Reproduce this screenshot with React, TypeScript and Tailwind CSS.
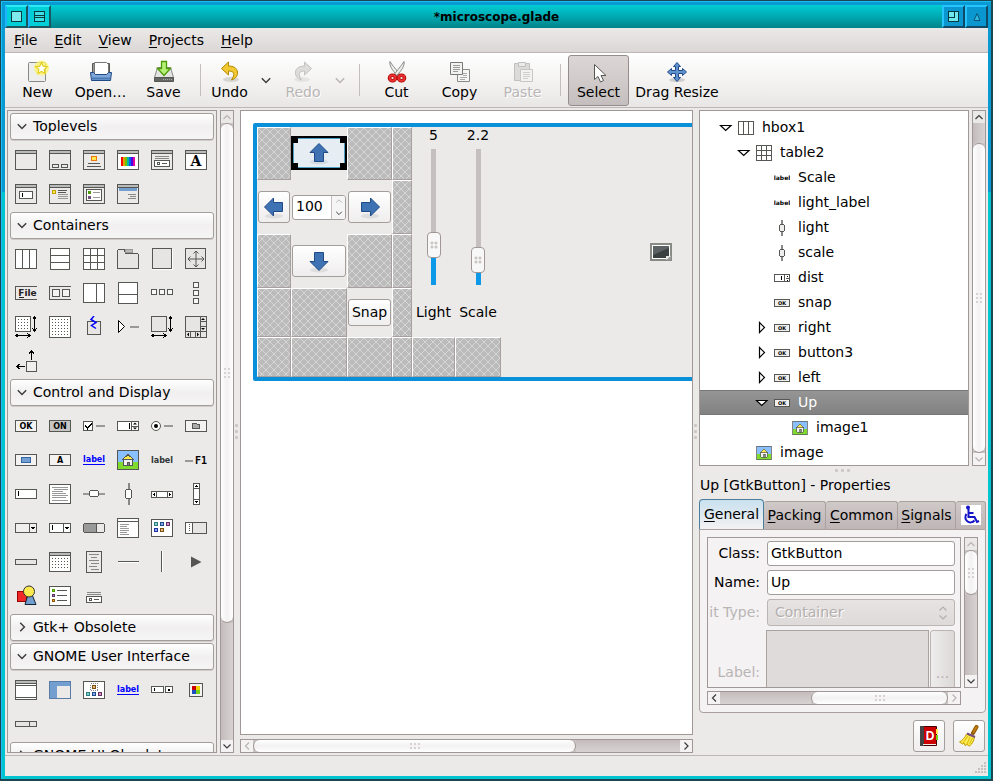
import React, { useId } from "react";
import type { ReactNode } from "react";

const INK = "#555753";

/* ---------- shared drawing helpers ---------- */

function Pic({ children, size = 22, box = 22 }: { children: ReactNode; size?: number; box?: number }) {
  return (
    <svg width={size} height={size} viewBox={`0 0 ${box} ${box}`} fill="none" stroke={INK} shapeRendering="crispEdges" aria-hidden="true" className="block shrink-0">
      {children}
    </svg>
  );
}

function Word({ x, y, children, size = 8, fill = "#000", anchor = "middle", family = "DejaVu Sans" }: { x: number; y: number; children: string; size?: number; fill?: string; anchor?: "start" | "middle"; family?: string }) {
  return (
    <text x={x} y={y} fontSize={size} fontWeight="bold" fontFamily={`"${family}", sans-serif`} fill={fill} stroke="none" textAnchor={anchor}>
      {children}
    </text>
  );
}

function Frame({ x = 0.5, y = 0.5, w = 21, h = 21, fill = "none", r = 1 }: { x?: number; y?: number; w?: number; h?: number; fill?: string; r?: number }) {
  return <rect x={x} y={y} width={w} height={h} rx={r} fill={fill} />;
}

function Win({ fill = "#ebeae8", children }: { fill?: string; children?: ReactNode }) {
  return (
    <Pic>
      <Frame y={1.5} h={19} fill={fill} />
      <path d="M1 3h20" stroke="#bababa" strokeWidth="2" />
      <path d="M1 4.500h20" />
      {children}
    </Pic>
  );
}

function HouseArt() {
  return (
    <>
      <rect x="1" y="1" width="20" height="20" fill="#8ac0ff" stroke="none" />
      <rect x="1" y="13" width="20" height="7" fill="#7fdc2f" stroke="none" />
      <path d="M6.500 10.500h9v6h-9z" fill="#f4f2f0" />
      <path d="M11 5.500L5.500 10.500h11z" fill="#fce94f" />
      <path d="M10.500 13v3.500h2V13z" fill="#888" />
      <rect x="0.500" y="1.500" width="21" height="19" rx="1" />
    </>
  );
}

/* ---------- palette icons ---------- */

const toplevels: ReactNode[] = [
  <Win />,
  <Win>
    <Frame x={3.5} y={15.500} w={6} h={3} />
    <Frame x={12.5} y={15.500} w={6} h={3} />
  </Win>,
  <Win>
    <rect x="8.500" y="7.500" width="5" height="4" fill="#fce94f" stroke="#f0780a" />
    <path d="M5 14.500h12M4 17.500h14" />
  </Win>,
  <Win fill="#fff">
    <path d="M5 8v9" stroke="#f00" strokeWidth="2" />
    <path d="M7 8v9" stroke="#e0a000" strokeWidth="2" />
    <path d="M9 8v9" stroke="#70c000" strokeWidth="2" />
    <path d="M11 8v9" stroke="#00b8a0" strokeWidth="2" />
    <path d="M13 8v9" stroke="#0060f0" strokeWidth="2" />
    <path d="M15 8v9" stroke="#5000e0" strokeWidth="2" />
    <path d="M17 8v9" stroke="#e000a0" strokeWidth="2" />
  </Win>,
  <Win>
    <path d="M4 7.500h14M4 9.500h14" stroke="#888" />
    <Frame x={3.5} y={11.500} w={15} h={6} fill="#fff" />
    <path d="M6.500 13.500h2v2h-2zM11 14.500h5" />
  </Win>,
  <Win fill="#fff">
    <Word x={11} y={17} size={14} family="DejaVu Serif">A</Word>
  </Win>,
  <Win>
    <Frame x={4.500} y={8.500} w={13} h={7} fill="#fff" />
    <path d="M7.500 10v4" stroke="#000" />
  </Win>,
  <Win>
    <rect x="3.500" y="7.500" width="3" height="3" fill="#fce94f" stroke="#c4a000" />
    <path d="M9 7.500h9M9 9.500h8" />
    <path d="M9 11.500h10M9 13.500h10M9 15.500h10" stroke="#999" />
  </Win>,
  <Win>
    <Frame x={3.5} y={6.500} w={15} h={11} fill="#fff" />
    <rect x="5" y="8" width="3" height="3" fill="#4e9a06" stroke="none" />
    <rect x="5" y="13" width="3" height="3" fill="#75507b" stroke="none" />
    <path d="M10 9.500h7M10 14.500h7" stroke="#999" />
  </Win>,
  <Win>
    <rect x="2" y="5" width="18" height="3" fill="#729fcf" stroke="none" />
    <path d="M11 11.500h8M13 13.500h6M11 15.500h8" stroke="#888" />
  </Win>,
];

const containers: ReactNode[] = [
  <Pic><Frame h={19} y={1.5} fill="#fff" /><path d="M7.500 2v19M14.500 2v19" /></Pic>,
  <Pic><Frame x={1.5} w={19} fill="#fff" /><path d="M2 7.500h18M2 14.500h18" /></Pic>,
  <Pic><Frame fill="#fff" /><path d="M7.500 1v20M14.500 1v20M1 7.500h20M1 14.500h20" /></Pic>,
  <Pic><path d="M.5 20.500V2.500l1-1h6l1 4h12l1 1v14z" fill="#e6e5e3" /><path d="M8.500 1.500h7v3h-7z" fill="#bababa" stroke="#999" /></Pic>,
  <Pic><Frame x={1.5} w={19} h={20} fill="#e6e5e3" /><path d="M21.500 1v20.500H1" stroke="#fff" /></Pic>,
  <Pic><Frame w={20} h={20} fill="#e6e5e3" /><path d="M11 3v16M3 11h16M8.500 5.500L11 3l2.500 2.500M8.500 16.500L11 19l2.500-2.500M5.500 8.500L3 11l2.500 2.500M16.500 8.500L19 11l-2.500 2.500" shapeRendering="auto" /></Pic>,
  <Pic><path d="M22 4.500H.5v13H22" /><Word x={12.5} y={14} size={9} fill="#222">File</Word><path d="M4 15.500h5" stroke="#222" /></Pic>,
  <Pic><path d="M22 4.500H.5v13H22" /><Frame x={3.5} y={7.500} w={7} h={7} fill="#f4f3f2" /><Frame x={13.5} y={7.500} w={7} h={7} fill="#f4f3f2" /></Pic>,
  <Pic><Frame y={1.5} h={19} fill="#fff" /><path d="M13.500 2v19" /></Pic>,
  <Pic><Frame x={1.5} w={19} fill="#fff" /><path d="M2 12.500h18" /></Pic>,
  <Pic><Frame x={0.5} y={7.500} w={5} h={5} fill="#f8f8f8" /><Frame x={8.5} y={7.500} w={5} h={5} fill="#f8f8f8" /><Frame x={16.5} y={7.500} w={5} h={5} fill="#f8f8f8" /></Pic>,
  <Pic><Frame x={8.500} y={0.5} w={5} h={5} fill="#f8f8f8" /><Frame x={8.500} y={8.500} w={5} h={5} fill="#f8f8f8" /><Frame x={8.500} y={16.500} w={5} h={5} fill="#f8f8f8" /></Pic>,
  <Pic><Frame w={15} h={15} fill="#fff" /><path d="M3 3.500h11M3 6.500h11M3 9.500h11M3 12.500h11" strokeDasharray="1 2" /><path d="M19.500 1v14M17.500 3.500l2-3 2 3M17.500 12.500l2 3 2-3M1 19.500h14M3.500 17.500l-3 2 3 2M12.500 17.500l3 2-3 2" stroke="#000" /></Pic>,
  <Pic><Frame fill="#fff" /><path d="M3 3.500h16M3 6.500h16M3 9.500h16M3 12.500h16M3 15.500h16M3 18.500h16" strokeDasharray="1 2" /></Pic>,
  <Pic><Frame x={4.500} y={5.500} w={13} h={13} fill="#e6e5e3" /><path d="M11 0L8 3.500l5 3L8.500 9.500l4.500 3" stroke="#00f" strokeWidth="1.500" shapeRendering="auto" /></Pic>,
  <Pic><path d="M1.500 4.500v12l6-6z" stroke="#000" fill="#fff" shapeRendering="auto" /><path d="M13 11h9" stroke="#999" strokeWidth="2" /></Pic>,
  <Pic><Frame w={15} h={15} fill="#e6e5e3" /><path d="M19.500 1v14M17.500 3.500l2-3 2 3M17.500 12.500l2 3 2-3M1 19.500h14M3.500 17.500l-3 2 3 2M12.500 17.500l3 2-3 2" stroke="#000" /></Pic>,
  <Pic><Frame fill="#e6e5e3" /><path d="M15.500 1v20M1 15.500h20M5.500 16v5M10.500 16v5M16 5.500h5M16 10.500h5" /><path d="M18 2l2 2h-4zM18 14l2-2h-4zM2 18.500l2-2v4zM14 18.500l-2-2v4z" fill="#000" stroke="none" shapeRendering="auto" /></Pic>,
  <Pic><Frame x={11.500} y={11.500} w={10} h={10} fill="#f0efee" /><path d="M16.500 10V1M14 3.500L16.500 1 19 3.500M10 16.500H2M4.500 14L2 16.500 4.500 19" stroke="#000" /></Pic>,
];

const controls: ReactNode[] = [
  <Pic><Frame y={5.500} h={11} fill="#f4f3f2" /><Word x={11} y={14} size={8}>OK</Word></Pic>,
  <Pic><Frame y={5.500} h={11} fill="#c8c6c5" /><Word x={11} y={14} size={8}>ON</Word></Pic>,
  <Pic><Frame y={6.500} w={9} h={9} fill="#fff" /><path d="M2.500 10.500l2 3 4-5" stroke="#000" strokeWidth="1.500" /><path d="M13 11h9" stroke="#999" strokeWidth="2" /></Pic>,
  <Pic><Frame y={6.500} h={9} fill="#fff" /><path d="M15 11h7" /><path d="M14.500 7v9" /><path d="M12 8v6" stroke="#000" /><path d="M18 7.500l2 2h-4zM18 14.500l2-2h-4z" fill="#000" stroke="none" shapeRendering="auto" /></Pic>,
  <Pic><circle cx="5" cy="11" r="4.500" fill="#fff" shapeRendering="auto" /><circle cx="5" cy="11" r="2" fill="#000" stroke="none" shapeRendering="auto" /><path d="M13 11h9" stroke="#999" strokeWidth="2" /></Pic>,
  <Pic><Frame y={5.500} h={11} fill="#f4f3f2" /><path d="M7.500 13.500v-5h4l1 1h2v4z" fill="#aaa" /></Pic>,
  <Pic><Frame y={5.500} h={11} fill="#f4f3f2" /><rect x="6.500" y="8.500" width="9" height="5" fill="#729fcf" stroke="#3465a4" /></Pic>,
  <Pic><Frame y={5.500} h={11} fill="#f4f3f2" /><Word x={11} y={14} size={8}>A</Word></Pic>,
  <Pic><Word x={11} y={13} size={8} fill="#00f">label</Word><path d="M0 15.500h22" stroke="#00f" /></Pic>,
  <Pic><HouseArt /></Pic>,
  <Pic><Word x={11} y={14} size={8} fill="#2e3436">label</Word></Pic>,
  <Pic><path d="M0 11.500h8" stroke="#999" strokeWidth="2" /><Word x={16} y={15} size={10} family="DejaVu Sans Mono">F1</Word></Pic>,
  <Pic><Frame y={6.500} h={9} fill="#fff" /><path d="M3.500 8v5" stroke="#000" /></Pic>,
  <Pic><Frame y={1.500} h={19} fill="#fff" /><path d="M3 4.500h16M5 6.500h14M3 8.500h11M3 10.500h14M3 12.500h16M3 14.500h14M3 17.500h16" stroke="#999" /></Pic>,
  <Pic><path d="M0 11h22" stroke="#999" strokeWidth="2" /><Frame x={6.500} y={7.500} w={9} h={6} fill="#fff" r={2} /></Pic>,
  <Pic><path d="M11.500 0v22" stroke="#888" strokeWidth="2" /><Frame x={8.500} y={6.500} w={6} h={9} fill="#fff" r={2} /></Pic>,
  <Pic><Frame y={8.500} h={6} fill="#fff" /><path d="M5.500 9v6M16.500 9v6" /><path d="M2 11.500l2-2v4zM20 11.500l-2-2v4z" fill="#000" stroke="none" /></Pic>,
  <Pic><Frame x={8.500} w={6} fill="#fff" /><path d="M9 5.500h6M9 16.500h6" /><path d="M11.500 2l2 2h-4zM11.500 20l2-2h-4z" fill="#000" stroke="none" /></Pic>,
  <Pic><Frame y={6.500} h={9} fill="#f0efee" /><path d="M14.500 7v9" /><path d="M18 13l2-3h-4z" fill="#000" stroke="none" /></Pic>,
  <Pic><Frame y={6.500} h={9} fill="#fff" /><path d="M14.500 7v9" /><path d="M3.500 8v5" stroke="#000" /><path d="M18 13l2-3h-4z" fill="#000" stroke="none" /></Pic>,
  <Pic><Frame y={6.500} h={9} fill="#ebeae8" r={2} /><rect x="1" y="7" width="12" height="8" fill="#999" stroke="none" /><path d="M13.500 7v9" /></Pic>,
  <Pic><Frame y={1.500} h={19} fill="#fff" /><path d="M1 4.500h20" /><path d="M3 7.500h9M3 9.500h7M3 11.500h9M3 13.500h9M3 15.500h7M3 17.500h9" stroke="#999" /></Pic>,
  <Pic><Frame y={2.500} h={17} fill="#fff" /><rect x="3.500" y="5.500" width="3" height="3" fill="#8cc" stroke="#2a7f80" /><rect x="9.500" y="5.500" width="3" height="3" fill="#8ae" stroke="#204a87" /><rect x="15.500" y="5.500" width="3" height="3" fill="#e8b" stroke="#5c3566" /><rect x="3.500" y="11.500" width="3" height="3" fill="#8ae" stroke="#20309f" /><rect x="9.500" y="11.500" width="3" height="3" fill="#db8" stroke="#7f5010" /></Pic>,
  <Pic><Frame y={5.500} h={11} fill="#e6e5e3" /><path d="M7.500 6v11" /><rect x="1" y="6" width="6" height="10" fill="#fff" stroke="none" /><path d="M4.500 7v8" stroke="#555" strokeDasharray="1 1" /></Pic>,
  <Pic><Frame y={8.500} h={5} fill="#e6e5e3" /></Pic>,
  <Pic><Frame y={1.500} h={19} fill="#fff" /><path d="M1 3h20" stroke="#bababa" strokeWidth="2" /><path d="M1 4.500h20" /><path d="M3 7.500h17M3 10.500h17M3 13.500h17M3 16.500h17" strokeDasharray="1 2" /></Pic>,
  <Pic><Frame x={3.500} w={15} fill="#ebeae8" /><path d="M6 3.500h10M8 6.500h6M6 9.500h10M8 12.500h8M6 15.500h8M8 18.500h8" stroke="#888" /></Pic>,
  <Pic><path d="M1 10.500h21" /><path d="M1 11.500h21" stroke="#fff" /></Pic>,
  <Pic><path d="M10.500 0v21" /><path d="M11.500 0v21" stroke="#fff" /></Pic>,
  <Pic><path d="M6 5.500v11L16.500 11z" fill="#555" stroke="none" shapeRendering="auto" /></Pic>,
  <Pic><rect x="2.500" y="6.500" width="9" height="10" fill="#ef2929" stroke="#900" /><path d="M10 19.500h11L17 9.500h-4z" fill="#729fcf" stroke="#123" shapeRendering="auto" /><circle cx="14" cy="6.500" r="5.500" fill="#fce94f" stroke="#333" shapeRendering="auto" /></Pic>,
  <Pic><Frame y={1.500} h={19} fill="#fff" /><rect x="3.500" y="4.500" width="2" height="2" fill="#8ae234" stroke="#4e9a06" /><rect x="3.500" y="9.500" width="2" height="2" fill="#ad7fa8" stroke="#5c3566" /><rect x="3.500" y="14.500" width="2" height="2" fill="#fcaf3e" stroke="#8f5902" /><path d="M8 5.500h10M8 10.500h10M8 15.500h10" /></Pic>,
  <Pic><path d="M4 7.500h14M4 9.500h14" stroke="#888" /><Frame x={3.500} y={11.500} w={15} h={6} fill="#fff" /><path d="M6.500 13.500h2v2h-2zM11 14.500h5" /></Pic>,
];

const gnomeUi: ReactNode[] = [
  <Pic><Frame y={1.500} h={19} fill="#fff" /><path d="M1 3h20" stroke="#bababa" strokeWidth="2" /><path d="M1 4.500h20M1 6.500h20M1 18.500h20" /></Pic>,
  <Pic><Frame y={2.500} h={17} fill="#ebeae8" r={0} /><path d="M1 3h20v4H8v12H1z" fill="#729fcf" stroke="none" /><rect x=".5" y="2.500" width="21" height="17" stroke="#5a7ba5" /></Pic>,
  <Pic><Frame y={2.500} h={17} fill="#fff" /><path d="M7.500 4.500h7v7h-7z" stroke="#888" strokeDasharray="1 1" /><rect x="9.500" y="6.500" width="3" height="3" fill="#db8" stroke="#7f5010" /><rect x="3.500" y="13.500" width="3" height="3" fill="#8cc" stroke="#2a7f80" /><rect x="9.500" y="13.500" width="3" height="3" fill="#8ae" stroke="#204a87" /><rect x="15.500" y="13.500" width="3" height="3" fill="#e8b" stroke="#5c3566" /></Pic>,
  <Pic><Word x={11} y={13} size={8} fill="#00f">label</Word><path d="M0 15.500h22" stroke="#00f" /></Pic>,
  <Pic><Frame y={7.500} w={12} h={6} fill="#fff" /><Frame x={14.500} y={7.500} w={7} h={6} fill="#fff" /><path d="M3.500 9v3" stroke="#000" /><path d="M18 12.500l2-3h-4z" fill="#000" stroke="none" /></Pic>,
  <Pic><Frame x={4.500} y={4.500} w={13} h={13} fill="#f4f3f2" /><rect x="7" y="7" width="4" height="4" fill="#cc0000" stroke="none" /><rect x="11" y="7" width="4" height="4" fill="#edd400" stroke="none" /><rect x="7" y="11" width="4" height="4" fill="#204ac0" stroke="none" /><rect x="11" y="11" width="4" height="4" fill="#73d216" stroke="none" /></Pic>,
  <Pic><Frame y={8.500} h={5} fill="#e6e5e3" /><path d="M14.500 9v5" /></Pic>,
];

/* ---------- generic widgets ---------- */

function Chevron({ dir, faint = false, size = 10 }: { dir: "up" | "down" | "left" | "right"; faint?: boolean; size?: number }) {
  const d = { up: "M1.500 7L5 3.500 8.500 7", down: "M1.500 3.500L5 7l3.500-3.500", left: "M7 1.500L3.500 5 7 8.500", right: "M3.500 1.500L7 5 3.500 8.500" }[dir];
  return (
    <svg width={size} height={size} viewBox="0 0 10 10" fill="none" stroke={faint ? "#b8b4b3" : "#3c3c3c"} strokeWidth="1.200" aria-hidden="true" className="block shrink-0">
      <path d={d} />
    </svg>
  );
}

function Dots({ cols, rows, step = 4 }: { cols: number; rows: number; step?: number }) {
  const cells = Array.from({ length: cols * rows }, (_, i) => i);
  return (
    <svg width={cols * step} height={rows * step} fill="#cbc7c6" aria-hidden="true" className="block shrink-0">
      {cells.map((i) => (
        <rect key={i} x={(i % cols) * step + 1} y={Math.floor(i / cols) * step + 1} width={step > 4 ? 3 : 2} height={step > 4 ? 3 : 2} rx="1" />
      ))}
    </svg>
  );
}

function VScroll({ before, thumb, after, faintUp, faintDown }: { before: string; thumb: string; after: string; faintUp?: boolean; faintDown?: boolean }) {
  return (
    <div className="flex w-[14px] shrink-0 flex-col border border-[#a09896] bg-[#cac3c3]">
      <button type="button" aria-label="Scroll up" className="flex h-3 shrink-0 items-center justify-center bg-[#ebe9e8]"><Chevron dir="up" faint={faintUp} /></button>
      <div className={`${before} bg-linear-to-r from-[#c4bcbc] to-[#d8d3d2]`} />
      <div className={`${thumb} flex items-center justify-center rounded-[6px] border-y border-[#a09896] bg-linear-to-r from-white via-[#f3f1f2] to-white`}>
        <Dots cols={2} rows={3} />
      </div>
      <div className={`${after} bg-linear-to-r from-[#c4bcbc] to-[#d8d3d2]`} />
      <button type="button" aria-label="Scroll down" className="flex h-3 shrink-0 items-center justify-center bg-[#f4f2f2]"><Chevron dir="down" faint={faintDown} /></button>
    </div>
  );
}

function HScroll({ before, thumb, after, faintLeft, faintRight }: { before: string; thumb: string; after: string; faintLeft?: boolean; faintRight?: boolean }) {
  return (
    <div className="flex h-[14px] shrink-0 border border-[#a09896] bg-[#cac3c3]">
      <button type="button" aria-label="Scroll left" className="flex w-3 shrink-0 items-center justify-center bg-[#f4f2f2]"><Chevron dir="left" faint={faintLeft} /></button>
      <div className={`${before} bg-linear-to-b from-[#c4bcbc] to-[#d8d3d2]`} />
      <div className={`${thumb} flex items-center justify-center rounded-[6px] border-x border-[#a09896] bg-linear-to-b from-white via-[#f3f1f2] to-white`}>
        <Dots cols={3} rows={2} />
      </div>
      <div className={`${after} bg-linear-to-b from-[#c4bcbc] to-[#d8d3d2]`} />
      <button type="button" aria-label="Scroll right" className="flex w-3 shrink-0 items-center justify-center bg-[#f4f2f2]"><Chevron dir="right" faint={faintRight} /></button>
    </div>
  );
}

/* ---------- title bar, menus, toolbar ---------- */

function TitleBar() {
  const cyan = "flex w-[23px] items-center justify-center border-2 border-t-[#2be9f5] border-l-[#1fb4ff] border-r-[#1a5560] border-b-[#1a5560] bg-[#00cfd8]";
  const blue = "flex w-[23px] items-center justify-center border-2 border-t-[#26c4ff] border-l-[#26c4ff] border-r-[#114a66] border-b-[#114a66] bg-[#0a97d0]";
  return (
    <header className="flex h-[23px] shrink-0 bg-linear-to-b from-[#00ccd4] via-[#00aab2] to-[#00838a]">
      <button type="button" aria-label="Window menu" className={cyan}>
        <svg width="11" height="11" shapeRendering="crispEdges"><rect x=".5" y=".5" width="10" height="10" fill="#7fe9ee" stroke="#063a40" /></svg>
      </button>
      <button type="button" aria-label="Shade" className={cyan}>
        <svg width="11" height="11" shapeRendering="crispEdges" fill="#3fdce4" stroke="#063a40"><path d="M.5 .5h10v10h-10zM1 4.500h10M1 6.500h10" /></svg>
      </button>
      <h1 className="flex flex-1 items-center justify-center text-[12px] font-bold">*microscope.glade</h1>
      <button type="button" aria-label="Maximize" className={blue}>
        <svg width="11" height="11" shapeRendering="crispEdges" fill="#6fe8ee" stroke="#063a40"><path d="M.5 .5h10v10h-10zM.5 .5h6v6h-6z" /></svg>
      </button>
      <button type="button" aria-label="Close" className={blue}>
        <svg width="12" height="12" fill="#2fb8e4" stroke="#0b5676"><path d="M6 2.500l3 7H3z" /></svg>
      </button>
    </header>
  );
}

function Mnemonic({ text }: { text: string }) {
  return (
    <span><span className="underline underline-offset-2">{text[0]}</span>{text.slice(1)}</span>
  );
}

function MenuBar() {
  return (
    <nav className="flex h-[25px] shrink-0 items-center gap-px border-b border-[#bdb6b5] bg-linear-to-b from-[#ebe9e7] to-[#dbd7d6] pl-px">
      {["File", "Edit", "View", "Projects", "Help"].map((m) => (
        <button key={m} type="button" className="px-2 leading-5"><Mnemonic text={m} /></button>
      ))}
    </nav>
  );
}

const art = "block size-6";

const toolArt: Record<string, ReactNode> = {
  New: (
    <svg viewBox="0 0 24 24" className={art}>
      <rect x="2.500" y="2.500" width="17" height="19" rx="1" fill="#eeeeec" stroke="#888a85" />
      <circle cx="15.500" cy="8" r="7.500" fill="#fdf46a" opacity=".75" />
      <path d="M15.500 2.500l1.700 3.700 4 .5-3 2.700.8 4-3.500-2-3.500 2 .8-4-3-2.700 4-.5z" fill="#fff" stroke="#e3cf1b" strokeWidth="1.200" />
    </svg>
  ),
  "Open…": (
    <svg viewBox="0 0 24 24" className={art}>
      <path d="M3.500 3.500h17v12h-17z" fill="#9a9c98" stroke="#555753" />
      <path d="M5.500 2.500h12l2 2v10h-14z" fill="#fff" stroke="#777" />
      <path d="M1.500 12.500h3l2 2h11l2-2h3l-1 8h-19z" fill="#7ea6d6" stroke="#204a87" />
      <path d="M3 18.500h18" stroke="#4a7ab8" strokeWidth="2" />
    </svg>
  ),
  Save: (
    <svg viewBox="0 0 24 24" className={art}>
      <path d="M5.500 7.500h13l3 10h-19z" fill="#e4e5e2" stroke="#888a85" />
      <path d="M2.500 17.500h19v4h-19z" fill="#666864" stroke="#555753" />
      <path d="M11 19.500h9" stroke="#aaa" strokeDasharray="1 1" />
      <path d="M9.500 1.500h5v7h4L12 15.500 5.500 8.500h4z" fill="#b4f078" stroke="#4e9a06" strokeWidth="1.300" />
    </svg>
  ),
  Undo: (
    <svg viewBox="0 0 24 24" className={art}>
      <ellipse cx="13" cy="19.500" rx="8" ry="2.500" fill="#000" opacity=".12" />
      <path d="M10.500 2L3.500 8.500l7 6.500v-4c4 0 6 1.500 5 5-.4 1.500-1 2.500-2 4 4.500-1.500 6.500-4.500 6-8C19 8 15.500 6 10.500 6z" fill="#f0c832" stroke="#b58900" />
    </svg>
  ),
  Redo: (
    <svg viewBox="0 0 24 24" className={art}>
      <ellipse cx="11" cy="19.500" rx="8" ry="2.500" fill="#000" opacity=".06" />
      <path d="M13.500 2l7 6.500-7 6.500v-4c-4 0-6 1.500-5 5 .4 1.500 1 2.500 2 4C6 18.500 4 15.500 4.500 12 5 8 8.500 6 13.500 6z" fill="#dddcda" stroke="#c4c2c0" />
    </svg>
  ),
  Cut: (
    <svg viewBox="0 0 24 24" className={art}>
      <path d="M5 1.500c-1 3 2 9 7.500 14l1.500-2C10 8 7 5 5 1.500z" fill="#f0f0ee" stroke="#888a85" />
      <path d="M19 1.500c1 3-2 9-7.500 14L10 13.500C14 8 17 5 19 1.500z" fill="#f0f0ee" stroke="#888a85" />
      <ellipse cx="7.500" cy="18" rx="3" ry="2.700" fill="none" stroke="#a40000" strokeWidth="3.600" />
      <ellipse cx="16.500" cy="18" rx="3" ry="2.700" fill="none" stroke="#a40000" strokeWidth="3.600" />
      <ellipse cx="7.500" cy="18" rx="3" ry="2.700" fill="none" stroke="#ef3030" strokeWidth="2" />
      <ellipse cx="16.500" cy="18" rx="3" ry="2.700" fill="none" stroke="#ef3030" strokeWidth="2" />
    </svg>
  ),
  Copy: (
    <svg viewBox="0 0 24 24" className={art}>
      <path d="M9.500 9.500h12v12h-12z" fill="#f6f6f5" stroke="#888a85" />
      <path d="M12 17.500h7M12 19.500h5M15 13.500h4M15 15.500h4" stroke="#aaa" />
      <path d="M2.500 2.500h12v12h-12z" fill="#f2f2f0" stroke="#777975" />
      <path d="M5 5.500h7M5 7.500h7M5 9.500h7M5 11.500h5" stroke="#999b97" />
    </svg>
  ),
  Paste: (
    <svg viewBox="0 0 24 24" className={art}>
      <path d="M3.500 3.500h15v17h-15z" fill="#dddbd9" stroke="#c2c0be" />
      <path d="M7.500 2.500h7v4h-7z" fill="#ecebe9" stroke="#c2c0be" />
      <path d="M9.500 9.500h12v12h-12z" fill="#f3f2f1" stroke="#c8c6c4" />
      <path d="M12 12.500h7M12 14.500h7M12 16.500h7M12 18.500h5" stroke="#d0cecc" />
    </svg>
  ),
  Select: (
    <svg viewBox="0 0 24 24" className={art}>
      <path d="M7.500 4.500v15l3.500-3 2.500 5.500 3-1.500-2.500-5h5z" fill="#fff" stroke="#555753" />
    </svg>
  ),
  "Drag Resize": (
    <svg viewBox="0 0 24 24" className={art}>
      <ellipse cx="12" cy="20" rx="8" ry="2" fill="#000" opacity=".15" />
      <path d="M12 2.500l3.500 4h-2v4h4v-2l4 3.500-4 3.500v-2h-4v4h2l-3.500 4-3.500-4h2v-4h-4v2l-4-3.500 4-3.500v2h4v-4h-2z" fill="#5f92cf" stroke="#204a87" />
    </svg>
  ),
};

function Tool({ name, width, disabled, active }: { name: string; width: string; disabled?: boolean; active?: boolean }) {
  return (
    <button
      type="button"
      disabled={disabled}
      aria-pressed={active}
      className={`${width} flex h-[51px] flex-col items-center justify-start rounded-[3px] border pt-1 whitespace-nowrap ${active ? "border-[#958d8c] bg-linear-to-b from-[#dcd7d6] to-[#c5bebe]" : "border-transparent"} ${disabled ? "text-[#b9b6b5] [text-shadow:1px_1px_0_#fff]" : ""}`}
    >
      {toolArt[name]}
      <span className="leading-4">{name}</span>
    </button>
  );
}

function Separator({ className }: { className: string }) {
  return <div className={`h-8 w-px shrink-0 bg-[#c4bebd] ${className}`} />;
}

function ToolBar() {
  return (
    <div role="toolbar" className="flex h-[55px] shrink-0 items-center border-b border-[#bdb6b5] bg-linear-to-b from-white to-[#e9e7e5] pl-px">
      <Tool name="New" width="w-[63px]" />
      <Tool name="Open…" width="w-[63px]" />
      <Tool name="Save" width="w-[63px]" />
      <Separator className="ml-[5px]" />
      <Tool name="Undo" width="w-[57px]" />
      <button type="button" aria-label="Undo history" className="flex w-4 justify-center"><Chevron dir="down" size={12} /></button>
      <Tool name="Redo" width="w-[58px]" disabled />
      <button type="button" aria-label="Redo history" disabled className="flex w-4 justify-center"><Chevron dir="down" faint size={12} /></button>
      <Separator className="mr-[5px] ml-[11px]" />
      <Tool name="Cut" width="w-[63px]" />
      <Tool name="Copy" width="w-[63px]" />
      <Tool name="Paste" width="w-[63px]" disabled />
      <Separator className="mr-[7px] ml-[6px]" />
      <Tool name="Select" width="w-[61px]" active />
      <Tool name="Drag Resize" width="w-24" />
    </div>
  );
}

/* ---------- palette ---------- */

function Section({ title, icons }: { title: string; icons?: ReactNode[] }) {
  return (
    <section>
      <button type="button" aria-expanded={!!icons} className="flex h-[27px] w-full items-center rounded-[3px] border border-[#a39d9b] bg-linear-to-b from-white via-[#f1eff0] to-[#f6f5f5] pb-[2px] pl-[5px] whitespace-nowrap shadow-[0_1px_0_#cfcbca]">
        <Chevron dir={icons ? "down" : "right"} size={12} />
        <span className="pl-[5px] leading-5">{title}</span>
      </button>
      {icons && (
        <div className="-mb-px grid auto-rows-[34px] grid-cols-6 items-center pt-[3px]">
          {icons.map((icon, i) => (
            <button key={i} type="button" aria-label={`${title} ${i + 1}`} className="pl-[5px]">{icon}</button>
          ))}
        </div>
      )}
    </section>
  );
}

function Palette() {
  return (
    <aside className="flex shrink-0 gap-[3px]">
      <div className="flex w-[210px] flex-col gap-[2px] overflow-hidden border border-[#a09896] p-[2px]">
        <Section title="Toplevels" icons={toplevels} />
        <Section title="Containers" icons={containers} />
        <Section title="Control and Display" icons={controls} />
        <Section title="Gtk+ Obsolete" />
        <Section title="GNOME User Interface" icons={gnomeUi} />
        <Section title="GNOME UI Obsolete" />
      </div>
      <VScroll before="h-0" thumb="flex-[500]" after="flex-[117]" faintUp />
    </aside>
  );
}

/* ---------- design canvas ---------- */

function Hatch({ className = "" }: { className?: string }) {
  const id = useId();
  return (
    <div className={`border-t border-r border-b border-l border-t-white border-r-[#a8a09f] border-b-[#a8a09f] border-l-white ${className}`}>
      <svg className="block size-full" aria-hidden="true">
        <defs>
          <pattern id={id} width="8" height="8" patternUnits="userSpaceOnUse">
            <rect width="8" height="8" fill="#bbb" />
            <path d="M0 0l8 8M8 0l-8 8" stroke="#d6d6d6" strokeWidth="1" />
          </pattern>
        </defs>
        <rect width="100%" height="100%" fill={`url(#${id})`} />
      </svg>
    </div>
  );
}

function Arrow({ dir }: { dir: "up" | "down" | "left" | "right" }) {
  const d = {
    up: "M12 2.500l9 9h-4.500v9h-9v-9H3z",
    down: "M12 21.500l9-9h-4.500v-9h-9v9H3z",
    left: "M2.500 12l9-9v4.500h9v9h-9V21z",
    right: "M21.500 12l-9-9v4.500h-9v9h9V21z",
  }[dir];
  return (
    <svg width="24" height="24" viewBox="0 0 24 24" aria-hidden="true" className="block shrink-0">
      <ellipse cx="12" cy="21" rx="9" ry="2.500" fill="#000" opacity=".08" />
      <path d={d} fill="#3f72b3" stroke="#204a87" />
    </svg>
  );
}

const raised = "flex items-center justify-center rounded-[3px] border border-[#a39d9b] bg-linear-to-b from-white to-[#efedee]";

const thumbStyle =
  "[&::-webkit-slider-thumb]:h-[26px] [&::-webkit-slider-thumb]:w-[14px] [&::-webkit-slider-thumb]:appearance-none [&::-webkit-slider-thumb]:rounded-[4px] [&::-webkit-slider-thumb]:border [&::-webkit-slider-thumb]:border-[#a09896] [&::-webkit-slider-thumb]:bg-[#f9f8f8] [&::-webkit-slider-thumb]:bg-[radial-gradient(circle_at_4px_10px,#cbc7c6_1px,transparent_2px),radial-gradient(circle_at_8px_10px,#cbc7c6_1px,transparent_2px),radial-gradient(circle_at_4px_14px,#cbc7c6_1px,transparent_2px),radial-gradient(circle_at_8px_14px,#cbc7c6_1px,transparent_2px)]";

function VSlider({ label, value, fill }: { label: string; value: number; fill: string }) {
  const id = useId();
  return (
    <div className="row-span-3 flex flex-col items-center">
      <output htmlFor={id} className="h-[22px] leading-4">{value}</output>
      <input
        id={id}
        type="range"
        aria-label={label}
        min={0}
        max={20}
        step={0.1}
        defaultValue={value}
        className={`h-[136px] w-[14px] appearance-none bg-[length:5px_100%] bg-center bg-no-repeat [direction:rtl] [writing-mode:vertical-lr] ${thumbStyle} ${fill}`}
      />
    </div>
  );
}

function Designer() {
  return (
    <main className="flex min-w-0 flex-1 flex-col gap-1">
      <div className="flex-1 overflow-hidden border border-[#a09896] bg-white pt-[12px] pl-[12px]">
        <div className="flex w-[572px] rounded-[2px] border-4 border-[#0a8fd9] bg-[#ebeae8]">
          <div className="grid grid-cols-[34px_56px_45px_20px_43px_46px] grid-rows-[53px_54px_54px_49px_40px]">
            <Hatch />
            <button type="button" aria-label="Up" className="relative mb-[2px] flex h-[34px] items-center justify-center self-center border-2 border-black bg-[#e6eef3] shadow-[inset_0_0_0_1px_#4d9fc4]">
              <Arrow dir="up" />
              <span className="absolute -top-[2px] -left-[2px] size-[7px] bg-black" />
              <span className="absolute -top-[2px] -right-[2px] size-[7px] bg-black" />
              <span className="absolute -bottom-[2px] -left-[2px] size-[7px] bg-black" />
              <span className="absolute -right-[2px] -bottom-[2px] size-[7px] bg-black" />
            </button>
            <Hatch />
            <Hatch />
            <VSlider label="Light" value={5} fill="bg-[linear-gradient(to_top,#0d99e8_25%,#c5bfbf_25%)]" />
            <VSlider label="Scale" value={2.2} fill="bg-[linear-gradient(to_top,#0d99e8_15%,#c5bfbf_15%)]" />

            <button type="button" aria-label="Left" className={`${raised} mx-px h-8 self-center`}><Arrow dir="left" /></button>
            <div className="mx-px flex h-[25px] self-center overflow-hidden rounded-[3px] border border-[#a39d9b] bg-white">
              <input aria-label="Distance" defaultValue="100" className="w-0 flex-1 pb-[2px] pl-[3px] outline-none" />
              <div className="flex w-[14px] flex-col border-l border-[#c4bebd] bg-[#f6f5f5]">
                <button type="button" aria-label="Increase" className="flex flex-1 items-center justify-center"><Chevron dir="up" faint size={8} /></button>
                <button type="button" aria-label="Decrease" className="flex flex-1 items-center justify-center"><Chevron dir="down" size={8} /></button>
              </div>
            </div>
            <button type="button" aria-label="Right" className={`${raised} mx-px h-8 self-center`}><Arrow dir="right" /></button>
            <Hatch />

            <Hatch />
            <button type="button" aria-label="Down" className={`${raised} mx-px h-8 self-center`}><Arrow dir="down" /></button>
            <Hatch />
            <Hatch />

            <Hatch />
            <Hatch />
            <button type="button" className={`${raised} mx-px h-[27px] self-center pb-[2px]`}>Snap</button>
            <Hatch />
            <span className="self-center pb-[2px] text-center">Light</span>
            <span className="self-center pb-[2px] text-center">Scale</span>

            <Hatch />
            <Hatch />
            <Hatch />
            <Hatch />
            <Hatch />
            <Hatch />
          </div>
          <div className="flex flex-1 items-center justify-center">
            <svg width="22" height="18" viewBox="0 0 22 18" role="img" aria-label="Video view">
              <rect x="1" y="1" width="20" height="16" fill="#fff" stroke="#888a85" strokeWidth="2" />
              <rect x="3" y="3" width="16" height="12" fill="#3a3f40" />
              <path d="M3 3h16v2L3 12z" fill="#5c6263" />
              <path d="M16 17l5-5v5z" fill="#9a9c98" />
              <path d="M16 17v-4h5z" fill="#e6e6e4" />
            </svg>
          </div>
        </div>
      </div>
      <HScroll before="w-0" thumb="flex-[322]" after="flex-[104]" faintLeft />
    </main>
  );
}

/* ---------- widget tree ---------- */

const indent = ["pl-[18px]", "pl-[36px]", "pl-[54px]", "pl-[72px]"];

const treeArt: Record<string, ReactNode> = {
  hbox: <Pic size={16} box={16}><Frame y={1.5} w={15} h={13} fill="#fff" /><path d="M5.500 2v13M10.500 2v13" /></Pic>,
  table: <Pic size={16} box={16}><Frame w={15} h={15} fill="#fff" /><path d="M5.500 1v15M10.500 1v15M1 5.500h15M1 10.500h15" /></Pic>,
  label: <Pic size={16} box={16}><Word x={8} y={10} size={6}>label</Word></Pic>,
  slider: <Pic size={16} box={16}><path d="M8 0v16" stroke="#888" strokeWidth="2" /><Frame x={5.500} y={4.500} w={5} h={7} fill="#eee" r={2} /></Pic>,
  spin: <Pic size={16} box={16}><Frame y={4.500} w={15} h={7} fill="#fff" /><path d="M10.500 5v7M12 8h3" /><path d="M7.500 6v4M13 6h1M13 10h1" stroke="#000" /></Pic>,
  ok: <Pic size={16} box={16}><Frame y={4.500} w={15} h={7} fill="#f1f0ef" /><Word x={8} y={10} size={5}>OK</Word></Pic>,
  image: <Pic size={16}><HouseArt /></Pic>,
};

const nodes: { name: string; depth: number; icon: string; state?: "open" | "closed"; selected?: boolean }[] = [
  { name: "hbox1", depth: 0, icon: "hbox", state: "open" },
  { name: "table2", depth: 1, icon: "table", state: "open" },
  { name: "Scale", depth: 2, icon: "label" },
  { name: "light_label", depth: 2, icon: "label" },
  { name: "light", depth: 2, icon: "slider" },
  { name: "scale", depth: 2, icon: "slider" },
  { name: "dist", depth: 2, icon: "spin" },
  { name: "snap", depth: 2, icon: "ok" },
  { name: "right", depth: 2, icon: "ok", state: "closed" },
  { name: "button3", depth: 2, icon: "ok", state: "closed" },
  { name: "left", depth: 2, icon: "ok", state: "closed" },
  { name: "Up", depth: 2, icon: "ok", state: "open", selected: true },
  { name: "image1", depth: 3, icon: "image" },
  { name: "image", depth: 1, icon: "image" },
];

function Tree() {
  return (
    <div className="flex gap-[3px]">
      <ul role="tree" className="flex-1 overflow-hidden border border-[#a09896] bg-white pt-1">
        {nodes.map((n) => (
          <li
            key={n.name}
            role="treeitem"
            aria-selected={!!n.selected}
            className={`flex h-[25px] items-center ${indent[n.depth]} ${n.selected ? "border-y border-[#777] bg-linear-to-b from-[#959595] to-[#828282] text-white" : ""}`}
          >
            <span className="mr-1 w-4 shrink-0">
              {n.state && (
                <svg width="16" height="14" viewBox="0 0 16 14" fill="#fff" stroke="#000" strokeWidth="1.200" className="block">
                  <path d={n.state === "open" ? "M2.500 4.500h10.500L7.700 9.500z" : "M5.500 1.500v10l5-5z"} />
                </svg>
              )}
            </span>
            {treeArt[n.icon]}
            <span className="pb-[2px] pl-2">{n.name}</span>
          </li>
        ))}
      </ul>
      <VScroll before="flex-[20]" thumb="flex-[310]" after="flex-[0]" faintDown />
    </div>
  );
}

/* ---------- property editor ---------- */

function Tabs() {
  const tab = "flex h-7 items-center justify-center rounded-t-[3px] border border-b-0 border-l-0 border-[#a9a09f] bg-linear-to-b from-[#cfc9c8] to-[#bfb6b6] pb-[2px]";
  return (
    <div role="tablist" className="flex h-[30px] items-end">
      <button type="button" role="tab" aria-selected className="-mb-px flex h-[31px] w-[65px] items-center justify-center rounded-t-[4px] border border-b-0 border-[#4b7f9b] bg-linear-to-b from-[#c9e1ef] to-[#f4f2f3] pb-[3px]"><Mnemonic text="General" /></button>
      <button type="button" role="tab" className={`${tab} w-[62px]`}><Mnemonic text="Packing" /></button>
      <button type="button" role="tab" className={`${tab} w-[72px]`}><Mnemonic text="Common" /></button>
      <button type="button" role="tab" className={`${tab} w-[58px]`}><Mnemonic text="Signals" /></button>
      <button type="button" role="tab" aria-label="Accessibility" className={`${tab} flex-1`}>
        <svg width="20" height="20" viewBox="0 0 20 20" fill="none" stroke="#1414c8" strokeWidth="2" className="bg-white">
          <circle cx="7" cy="2.500" r="2" fill="#1414c8" stroke="none" />
          <path d="M7.500 4v8h6l2.500 5 2-1M7.500 8h5" />
          <path d="M5.500 9a5 5 0 1 0 8 6.500" />
        </svg>
      </button>
    </div>
  );
}

function Properties() {
  const field = "h-[25px] rounded-[3px] border border-[#a39d9b] bg-white px-[3px] pb-[2px]";
  return (
    <div className="flex flex-1 flex-col">
      <h2 className="pl-px leading-5">Up [GtkButton] - Properties</h2>
      <div className="mt-1">
        <Tabs />
      </div>
      <div className="rounded-b-[4px] border border-[#a9a09f] bg-[#f4f2f3] p-[7px]">
        <div className="flex h-[151px] gap-[3px]">
          <div className="flex-1 overflow-hidden border border-[#a09896] px-px">
            <div className="grid w-[247px] grid-cols-[51px_188px] gap-x-[7px] gap-y-1 pt-[3px]">
              <label htmlFor="cls" className="self-center justify-self-end pb-[2px]">Class:</label>
              <input id="cls" defaultValue="GtkButton" className={field} />
              <label htmlFor="nm" className="self-center justify-self-end pb-[2px]">Name:</label>
              <input id="nm" defaultValue="Up" className={field} />
              <label htmlFor="et" className="flex items-center justify-end overflow-hidden pb-[2px] whitespace-nowrap text-[#b9b5b5]">Edit Type:</label>
              <div className="flex h-[27px] items-center rounded-[3px] border border-[#bab4b3] bg-linear-to-b from-[#e6e3e2] to-[#dedad9] pr-[6px]">
                <select id="et" disabled className="flex-1 appearance-none pb-[2px] pl-[7px] text-[#b4afae] opacity-100 [text-shadow:1px_1px_0_#fff]">
                  <option>Container</option>
                </select>
                <svg width="10" height="16" viewBox="0 0 10 16" fill="none" stroke="#b4afae" strokeWidth="1.200"><path d="M1.500 5.500L5 2l3.500 3.500M1.500 10.500L5 14l3.500-3.500" /></svg>
              </div>
              <label htmlFor="lb" className="self-center justify-self-end pb-[2px] text-[#b9b5b5]">Label:</label>
              <div className="-ml-px flex h-[86px] gap-px">
                <textarea id="lb" disabled className="w-0 flex-1 resize-none border border-[#a8a2a0] bg-[#dedbda]" />
                <button type="button" disabled className="w-[25px] rounded-[3px] border border-[#bab4b3] bg-linear-to-r from-[#eeecec] to-[#dcd8d8] text-[#b4afae]">...</button>
              </div>
            </div>
          </div>
          <VScroll before="h-0" thumb="flex-[43]" after="flex-[80]" faintUp />
        </div>
        <div className="mt-[3px] mr-[17px]">
          <HScroll before="flex-[92]" thumb="flex-[136]" after="w-0" faintRight />
        </div>
      </div>
      <div className="mt-auto flex justify-end gap-2 pr-px pb-px">
        <button type="button" aria-label="Documentation" className={`${raised} size-8`}>
          <svg width="22" height="22" viewBox="0 0 22 22">
            <path d="M2.500 1.500h16v19h-16z" fill="#cc0000" stroke="#400" />
            <path d="M4 1v20" stroke="#444" strokeWidth="4" />
            <path d="M5 19.500h13" stroke="#eee" />
            <path d="M18 4h2v5h-2z" fill="#fce94f" />
            <path d="M18 10h2v5h-2z" fill="#73d216" />
            <text x="12" y="15" fontSize="12" fontWeight="bold" fill="#fff" textAnchor="middle" fontFamily='"Liberation Sans", sans-serif'>D</text>
          </svg>
        </button>
        <button type="button" aria-label="Reset" className={`${raised} size-8`}>
          <svg width="22" height="22" viewBox="0 0 22 22">
            <path d="M15 8l3.500-6" stroke="#8f5902" strokeWidth="4" strokeLinecap="round" />
            <path d="M15.500 7l3-5" stroke="#c17d11" strokeWidth="2" strokeLinecap="round" />
            <path d="M8.500 9C7 13 4.500 15 1.500 17l3 2 1.500-1 1 2.500 2-1 2.500 1.500C15 18.500 16 15 16.500 12z" fill="#fce94f" stroke="#c4a000" />
            <path d="M10 11l-5 7M12 12l-3 7M14.500 13l-3 6" stroke="#d8bd10" />
            <path d="M9 8.500l8 3.500" stroke="#75507b" strokeWidth="2" />
          </svg>
        </button>
      </div>
    </div>
  );
}

function Splitter() {
  return <div className="flex w-[6px] shrink-0 items-center justify-center"><Dots cols={1} rows={3} step={6} /></div>;
}

export default function App() {
  return (
    <div className="h-screen min-w-[900px] border-t border-r-2 border-b-2 border-l border-[#1c4650] bg-[#00c4cf] font-['DejaVu_Sans',sans-serif] text-[14px] leading-5 text-black">
      <div className="h-full border-t border-l border-t-[#19bdf5] border-l-[#19bdf5] bg-[linear-gradient(#0a9ad3_190px,#00c4cf_190px)] p-[3px] pr-[3px]">
        <div className="flex h-full flex-col bg-[#ebeae8]">
          <TitleBar />
          <MenuBar />
          <ToolBar />
          <div className="flex min-h-0 flex-1 px-[2px] py-[2px]">
            <Palette />
            <Splitter />
            <Designer />
            <Splitter />
            <aside className="flex w-[287px] shrink-0 flex-col">
              <Tree />
              <div className="flex h-[9px] shrink-0 items-center justify-center"><Dots cols={3} rows={1} step={6} /></div>
              <Properties />
            </aside>
          </div>
          <footer className="flex h-[21px] shrink-0 items-end justify-end border-t border-[#bdb6b5]">
            <svg width="13" height="13" fill="#c4c0bf" aria-hidden="true" className="m-px">
              {[0, 1, 2, 3].flatMap((r) => Array.from({ length: r + 1 }, (_, c) => (
                <rect key={`${r}-${c}`} x={10 - c * 3} y={r * 3} width="2" height="2" />
              )))}
            </svg>
          </footer>
        </div>
      </div>
    </div>
  );
}
